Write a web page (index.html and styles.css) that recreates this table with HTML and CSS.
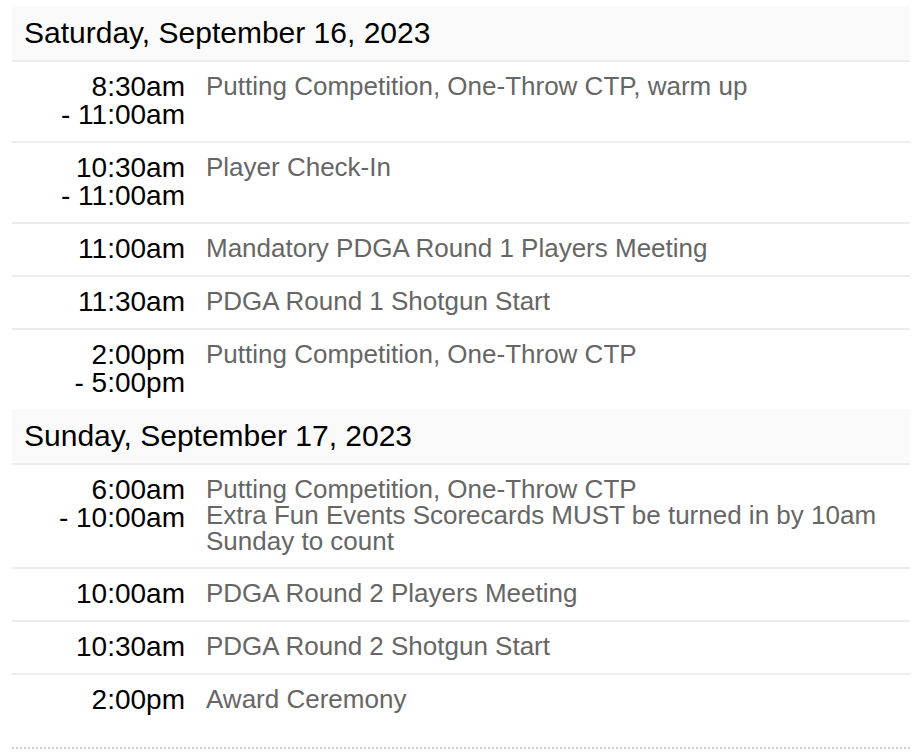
FILE: index.html
```html
<!DOCTYPE html>
<html>
<head>
<meta charset="utf-8">
<link rel="stylesheet" href="styles.css">
</head>
<body>
<div class="schedule">
  <section class="day">
    <h2 class="day-title">Saturday, September 16, 2023</h2>
    <div class="item">
      <div class="time">8:30am<br>- 11:00am</div>
      <div class="desc">Putting Competition, One-Throw CTP, warm up</div>
    </div>
    <div class="item">
      <div class="time">10:30am<br>- 11:00am</div>
      <div class="desc">Player Check-In</div>
    </div>
    <div class="item">
      <div class="time">11:00am</div>
      <div class="desc">Mandatory PDGA Round 1 Players Meeting</div>
    </div>
    <div class="item">
      <div class="time">11:30am</div>
      <div class="desc">PDGA Round 1 Shotgun Start</div>
    </div>
    <div class="item last">
      <div class="time">2:00pm<br>- 5:00pm</div>
      <div class="desc">Putting Competition, One-Throw CTP</div>
    </div>
  </section>
  <section class="day">
    <h2 class="day-title">Sunday, September 17, 2023</h2>
    <div class="item">
      <div class="time">6:00am<br>- 10:00am</div>
      <div class="desc">Putting Competition, One-Throw CTP<br>Extra Fun Events Scorecards MUST be turned in by 10am Sunday to count</div>
    </div>
    <div class="item">
      <div class="time">10:00am</div>
      <div class="desc">PDGA Round 2 Players Meeting</div>
    </div>
    <div class="item">
      <div class="time">10:30am</div>
      <div class="desc">PDGA Round 2 Shotgun Start</div>
    </div>
    <div class="item last">
      <div class="time">2:00pm</div>
      <div class="desc">Award Ceremony</div>
    </div>
  </section>
</div>
</body>
</html>
```

FILE: styles.css
```css
html, body {
  margin: 0;
  padding: 0;
  background: #fff;
}

body {
  font-family: "Liberation Sans", Arial, sans-serif;
}

.schedule {
  padding: 6px 12px 0 12px;
}

.day-title {
  margin: 0;
  height: 54px;
  line-height: 54px;
  padding: 0 12px;
  background: #fafafa;
  border-bottom: 2px solid #ececec;
  font-size: 30px;
  font-weight: normal;
  color: #000;
}

.item {
  display: grid;
  grid-template-columns: 173px 1fr;
  column-gap: 21px;
  padding: 11px 0 12px 0;
  border-bottom: 2px solid #ececec;
}

.item.last {
  border-bottom: none;
}

.day:last-child .item.last {
  padding-bottom: 33px;
  border-bottom: 2px dotted #cfcfcf;
}

.time {
  text-align: right;
  color: #000;
  font-size: 28px;
  line-height: 28px;
}

.desc {
  color: #666;
  font-size: 26px;
  line-height: 26.2px;
  padding-right: 20px;
}
```
